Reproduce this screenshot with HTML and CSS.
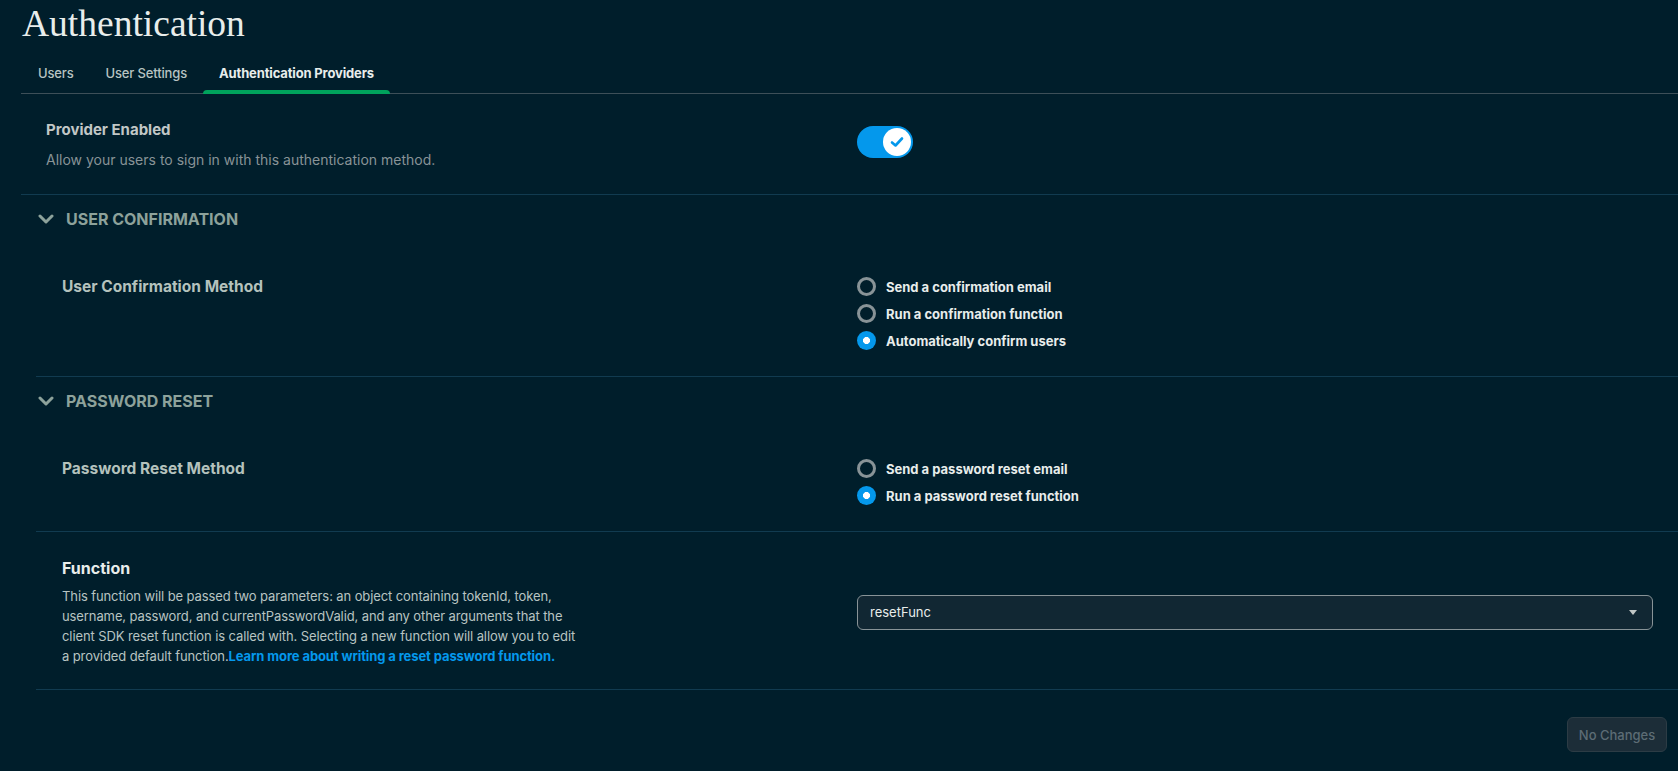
FILE: index.html
```html
<!DOCTYPE html>
<html lang="en">
<head>
<meta charset="utf-8">
<title>Authentication</title>
<link rel="stylesheet" href="styles.css">
</head>
<body>
<div class="page">
  <h1 class="title">Authentication</h1>
  <nav class="tabs">
    <a class="tab">Users</a>
    <a class="tab">User Settings</a>
    <a class="tab active">Authentication Providers</a>
  </nav>

  <div class="row provider">
    <div class="left">
      <div class="label">Provider Enabled</div>
      <div class="desc">Allow your users to sign in with this authentication method.</div>
    </div>
    <div class="right">
      <div class="toggle">
        <span class="knob">
          <svg width="14" height="12" viewBox="0 0 14 12"><path d="M2 6.5 L5.5 9.5 L12 2.5" fill="none" stroke="#0498ec" stroke-width="2.6" stroke-linecap="round" stroke-linejoin="round"/></svg>
        </span>
      </div>
    </div>
  </div>

  <section class="group">
    <div class="group-head">
      <svg class="chev" width="16" height="10" viewBox="0 0 16 10"><path d="M2 2 L8 8 L14 2" fill="none" stroke="currentColor" stroke-width="3" stroke-linecap="round" stroke-linejoin="round"/></svg>
      <span>User Confirmation</span>
    </div>
    <div class="group-body">
      <div class="row sub">
        <div class="left"><div class="label method">User Confirmation Method</div></div>
        <div class="right">
          <div class="options">
            <div class="opt"><span class="radio"></span><span>Send a confirmation email</span></div>
            <div class="opt"><span class="radio"></span><span>Run a confirmation function</span></div>
            <div class="opt"><span class="radio on"></span><span>Automatically confirm users</span></div>
          </div>
        </div>
      </div>
    </div>
  </section>

  <section class="group">
    <div class="group-head">
      <svg class="chev" width="16" height="10" viewBox="0 0 16 10"><path d="M2 2 L8 8 L14 2" fill="none" stroke="currentColor" stroke-width="3" stroke-linecap="round" stroke-linejoin="round"/></svg>
      <span>Password Reset</span>
    </div>
    <div class="group-body">
      <div class="row sub">
        <div class="left"><div class="label method">Password Reset Method</div></div>
        <div class="right">
          <div class="options">
            <div class="opt"><span class="radio"></span><span>Send a password reset email</span></div>
            <div class="opt"><span class="radio on"></span><span>Run a password reset function</span></div>
          </div>
        </div>
      </div>
      <div class="row sub fn">
        <div class="left">
          <div class="label strong">Function</div>
          <p class="fn-desc">This function will be passed two parameters: an object containing tokenId, token, username, password, and currentPasswordValid, and any other arguments that the client SDK reset function is called with. Selecting a new function will allow you to edit a provided default function.<a class="link">Learn more about writing a reset password function.</a></p>
        </div>
        <div class="right center">
          <div class="select">
            <span>resetFunc</span>
            <svg width="10" height="7" viewBox="0 0 10 7"><path d="M1 1 L9 1 L5 6 Z" fill="#c1c7c6"/></svg>
          </div>
        </div>
      </div>
    </div>
  </section>

  <div class="footer">
    <button class="btn" disabled>No Changes</button>
  </div>
</div>
</body>
</html>
```

FILE: styles.css
```css
* { box-sizing: border-box; }
html, body {
  margin: 0;
  background: #001e2b;
}
body {
  font-family: "Inter", "Lato", sans-serif;
  color: #e8edeb;
  width: 1678px;
  height: 771px;
  overflow: hidden;
}
.page {
  padding-left: 21px;
}
.title {
  margin: 0;
  padding-left: 1px;
  font-family: "Liberation Serif", serif;
  font-weight: 400;
  font-size: 37.5px;
  line-height: 48px;
  color: #e8edeb;
}
.tabs {
  display: flex;
  padding-left: 1px;
  border-bottom: 1px solid #3d4f58;
  height: 46px;
}
.tab {
  position: relative;
  padding: 5px 16px 0;
  line-height: 40px;
  font-size: 13px;
  letter-spacing: -0.15px;
  font-weight: 500;
  color: #b8c4c2;
}
.tab.active {
  font-weight: 700;
  color: #e8edeb;
}
.tab.active::after {
  content: "";
  position: absolute;
  left: 0;
  right: 0;
  bottom: -1px;
  height: 4px;
  border-radius: 4px 4px 0 0;
  background: #00a35c;
}
.row {
  display: grid;
  grid-template-columns: 1fr 796px;
  padding-right: 25px;
  border-bottom: 1px solid #113b50;
}
.provider {
  padding: 26px 25px 24px 25px;
}
.label {
  font-size: 15px;
  font-weight: 700;
  line-height: 20px;
  color: #c1c7c6;
}
.desc {
  margin-top: 10px;
  font-size: 14px;
  line-height: 20px;
  color: #889397;
}
.toggle {
  margin-top: 6px;
  width: 56px;
  height: 32px;
  border-radius: 16px;
  background: #0498ec;
  display: flex;
  align-items: center;
  justify-content: flex-end;
  padding: 2px;
}
.knob {
  width: 28px;
  height: 28px;
  border-radius: 50%;
  background: #ffffff;
  display: flex;
  align-items: center;
  justify-content: center;
}
.group-head {
  display: flex;
  align-items: center;
  gap: 12px;
  padding: 14px 0 0 17px;
  line-height: 20px;
  font-size: 16px;
  font-weight: 700;
  text-transform: uppercase;
  color: #8da29b;
}
.chev { display: block; color: #8da29b; }
.group-body {
  margin-left: 15px;
}
.sub {
  padding: 44px 25px 22px 26px;
}
.method {
  font-size: 15.5px;
  line-height: 27px;
  color: #b4c2bd;
}
.options {
  display: flex;
  flex-direction: column;
}
.opt {
  display: flex;
  align-items: center;
  gap: 10px;
  height: 27px;
  font-size: 13px;
  font-weight: 700;
  color: #e8edeb;
}
.radio {
  width: 19px;
  height: 19px;
  border-radius: 50%;
  border: 3px solid #889397;
  flex: none;
}
.radio.on {
  border: none;
  background: radial-gradient(circle, #ffffff 0 3.2px, #0498ec 3.8px);
}
.fn {
  padding-top: 26px;
  padding-bottom: 23px;
}
.strong {
  font-size: 16px;
  color: #e8edeb;
}
.fn-desc {
  margin: 8px 0 0;
  max-width: 520px;
  font-size: 13px;
  letter-spacing: -0.1px;
  line-height: 20px;
  color: #b8c4c2;
}
.link {
  color: #0498ec;
  font-weight: 700;
}
.center {
  align-self: center;
}
.select {
  height: 35px;
  border: 1px solid #889397;
  border-radius: 6px;
  background: #112733;
  display: flex;
  align-items: center;
  justify-content: space-between;
  padding: 0 14px 0 12px;
  font-size: 13px;
  color: #e8edeb;
}
.footer {
  display: flex;
  justify-content: flex-end;
  padding: 27px 11px 0 0;
}
.btn {
  width: 100px;
  height: 35px;
  border-radius: 6px;
  border: 1px solid #2c3c45;
  background: #1c2d38;
  color: #5c6c75;
  font-family: inherit;
  font-size: 13px;
  font-weight: 500;
}
```
